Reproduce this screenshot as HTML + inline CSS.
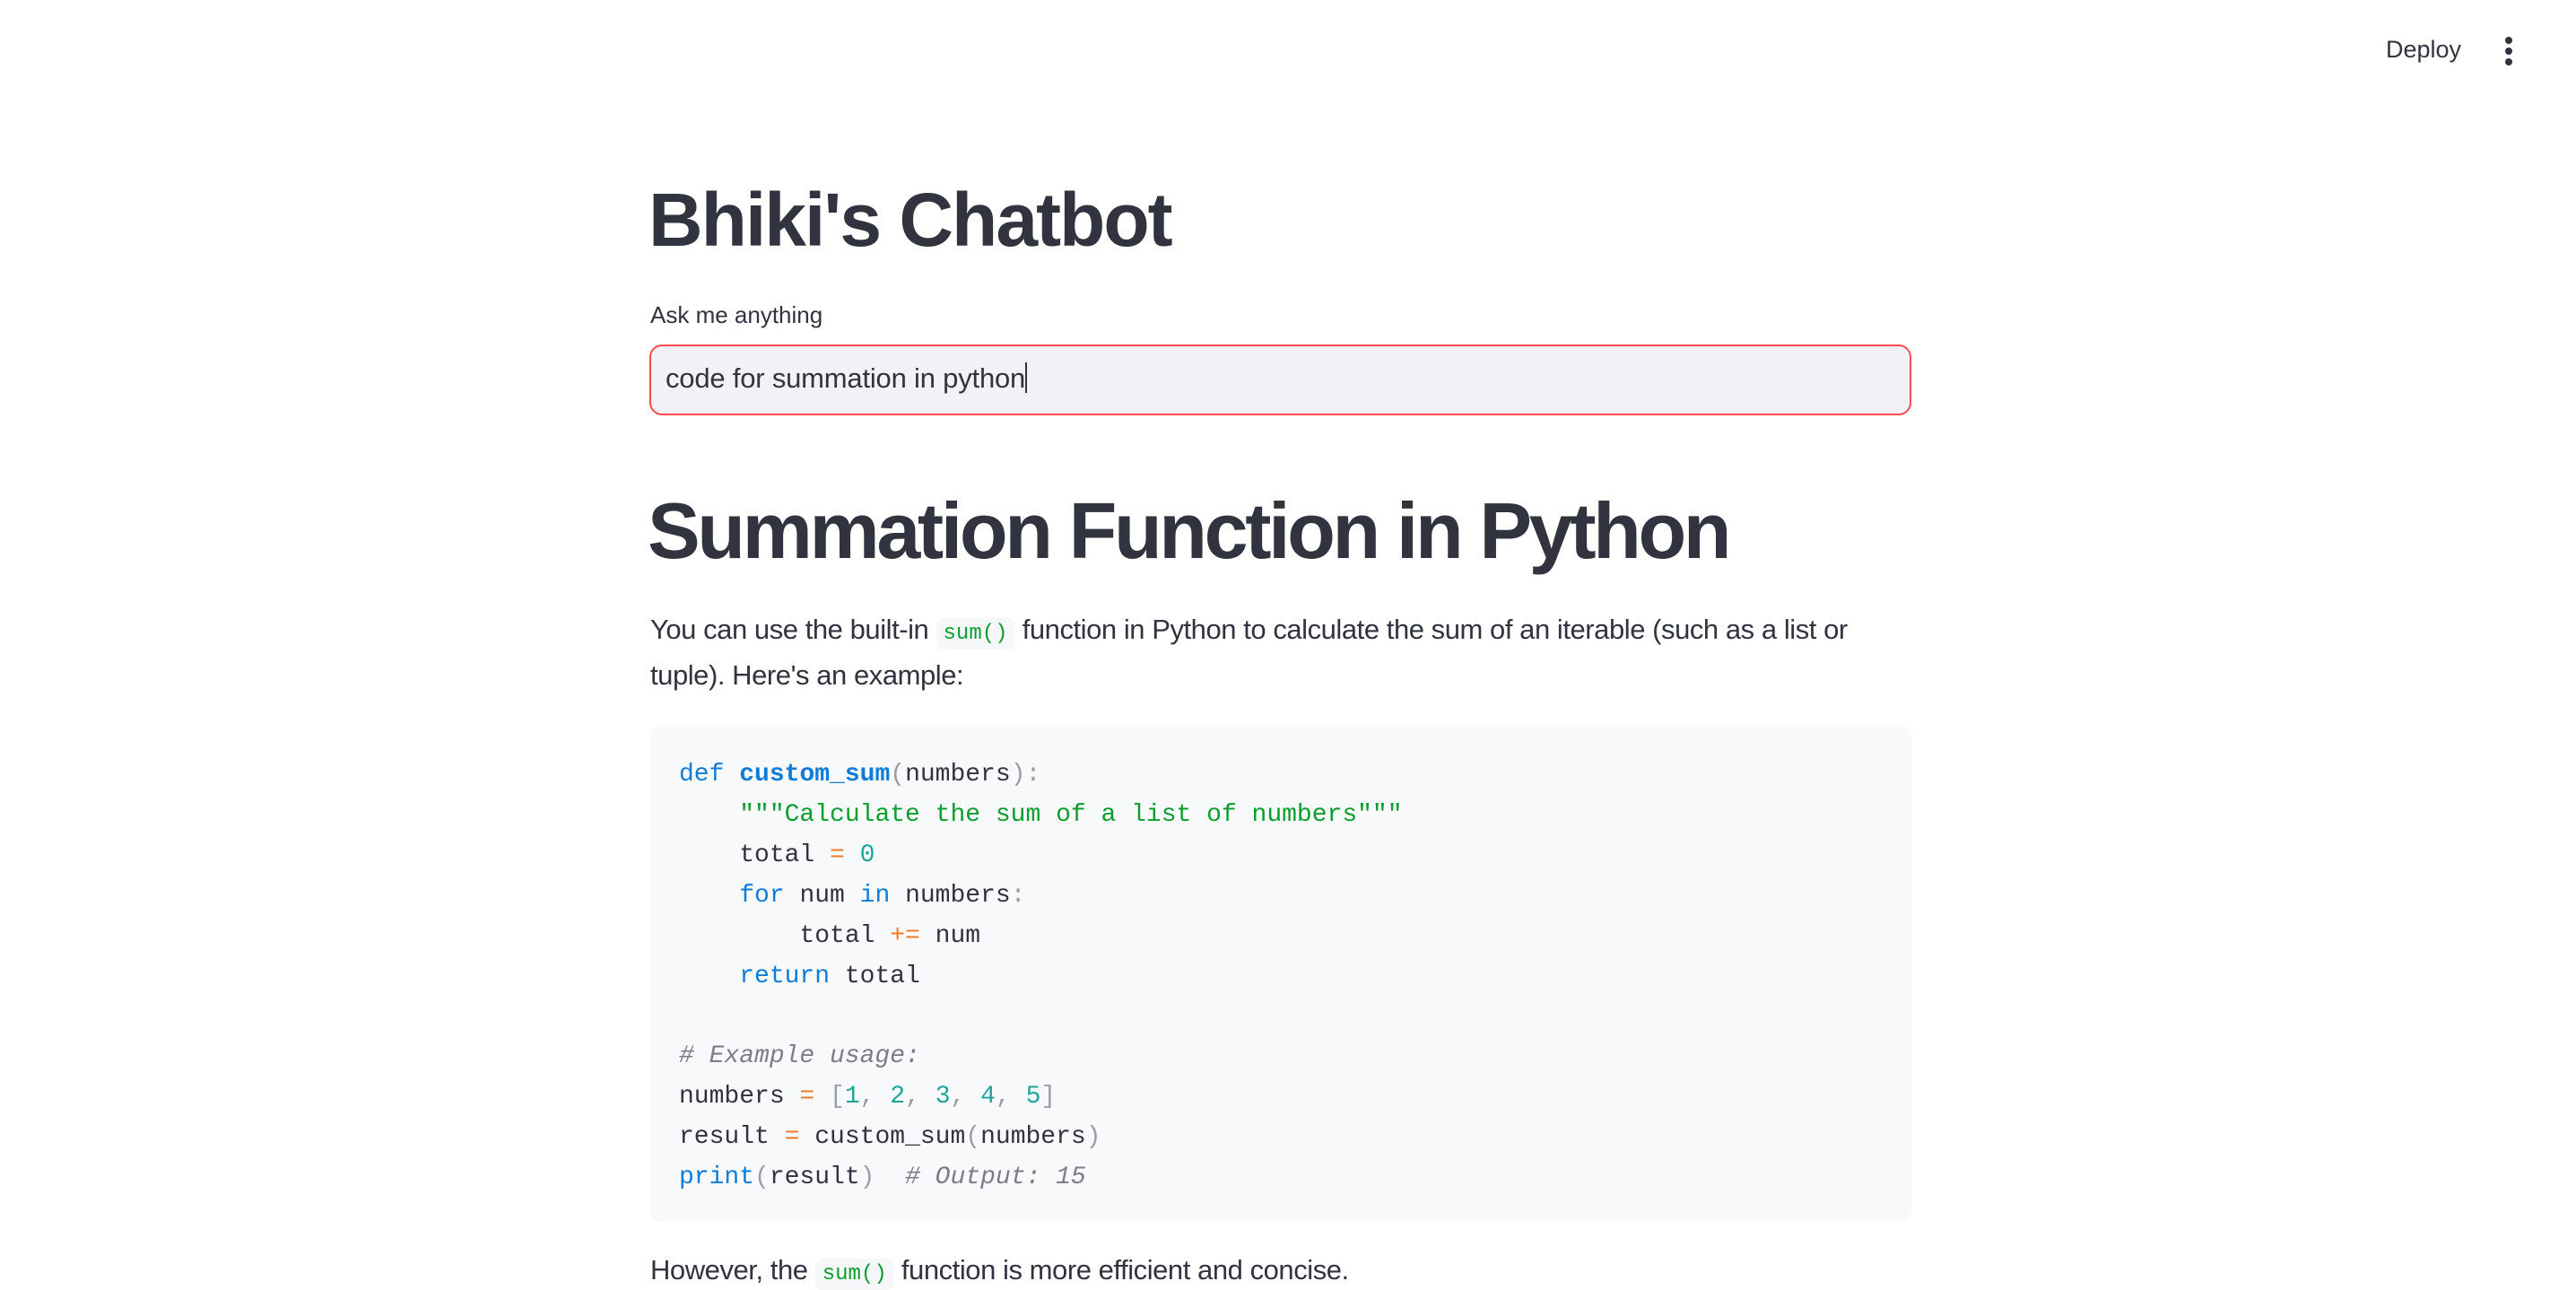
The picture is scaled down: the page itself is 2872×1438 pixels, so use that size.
<!DOCTYPE html>
<html><head><meta charset="utf-8"><style>
html,body{margin:0;padding:0;background:#fff;width:2872px;height:1416px;overflow:hidden;font-family:"Liberation Sans",sans-serif;color:#31333f}
.abs{position:absolute;white-space:nowrap}
.code{position:absolute;left:725px;top:808px;width:1406px;height:555px;background:#f8f9fb;border-radius:14px}
.code pre{margin:0;position:absolute;left:32px;top:34px;font-family:"Liberation Mono",monospace;font-size:28px;line-height:44.9px;color:#31333f}
.k{color:#0f7dd8}.f{color:#0f7dd8;font-weight:bold}.s{color:#0a9e2e}.o{color:#f07a23}.n{color:#1fa59a}.c{color:#7b7d8a;font-style:italic}.p{color:#9a9ca6}
.ic{font-family:"Liberation Mono",monospace;font-size:24px;line-height:1;color:#0a9e2e;background:#f6f7f9;border-radius:8px;padding:4px 8px;letter-spacing:0}
</style></head><body>
<div class="abs" style="left:2660px;top:40px;font-size:27px">Deploy</div>
<svg class="abs" style="left:2788px;top:40px" width="18" height="34"><circle cx="9" cy="5" r="4" fill="#31333f"/><circle cx="9" cy="17" r="4" fill="#31333f"/><circle cx="9" cy="29" r="4" fill="#31333f"/></svg>
<div class="abs" style="left:723px;top:195px;font-size:84px;font-weight:bold;letter-spacing:-2px;line-height:100px">Bhiki's Chatbot</div>
<div class="abs" style="left:725px;top:336px;font-size:26px">Ask me anything</div>
<div class="abs" style="left:724px;top:384px;width:1403px;height:75px;background:#f0f2f6;border:2px solid #ff4b4b;border-radius:14px"></div>
<div class="abs" style="left:742px;top:404px;font-size:31px;letter-spacing:-0.2px">code for summation in python<span style="display:inline-block;width:2px;height:34px;background:#31333f;vertical-align:-6px"></span></div>
<div class="abs" style="left:722px;top:539px;font-size:88px;font-weight:bold;letter-spacing:-3.4px;line-height:105px">Summation Function in Python</div>
<div class="abs" style="left:725px;top:676px;font-size:31px;letter-spacing:-0.45px;line-height:51px">You can use the built-in <span class="ic">sum()</span> function in Python to calculate the sum of an iterable (such as a list or<br>tuple). Here's an example:</div>
<div class="code"><pre><span class="k">def</span> <span class="f">custom_sum</span><span class="p">(</span>numbers<span class="p">):</span>
    <span class="s">"""Calculate the sum of a list of numbers"""</span>
    total <span class="o">=</span> <span class="n">0</span>
    <span class="k">for</span> num <span class="k">in</span> numbers<span class="p">:</span>
        total <span class="o">+=</span> num
    <span class="k">return</span> total

<span class="c"># Example usage:</span>
numbers <span class="o">=</span> <span class="p">[</span><span class="n">1</span><span class="p">,</span> <span class="n">2</span><span class="p">,</span> <span class="n">3</span><span class="p">,</span> <span class="n">4</span><span class="p">,</span> <span class="n">5</span><span class="p">]</span>
result <span class="o">=</span> custom_sum<span class="p">(</span>numbers<span class="p">)</span>
<span class="k">print</span><span class="p">(</span>result<span class="p">)</span>  <span class="c"># Output: 15</span></pre></div>
<div class="abs" style="left:725px;top:1398px;font-size:31px;letter-spacing:-0.45px">However, the <span class="ic">sum()</span> function is more efficient and concise.</div>
</body></html>
